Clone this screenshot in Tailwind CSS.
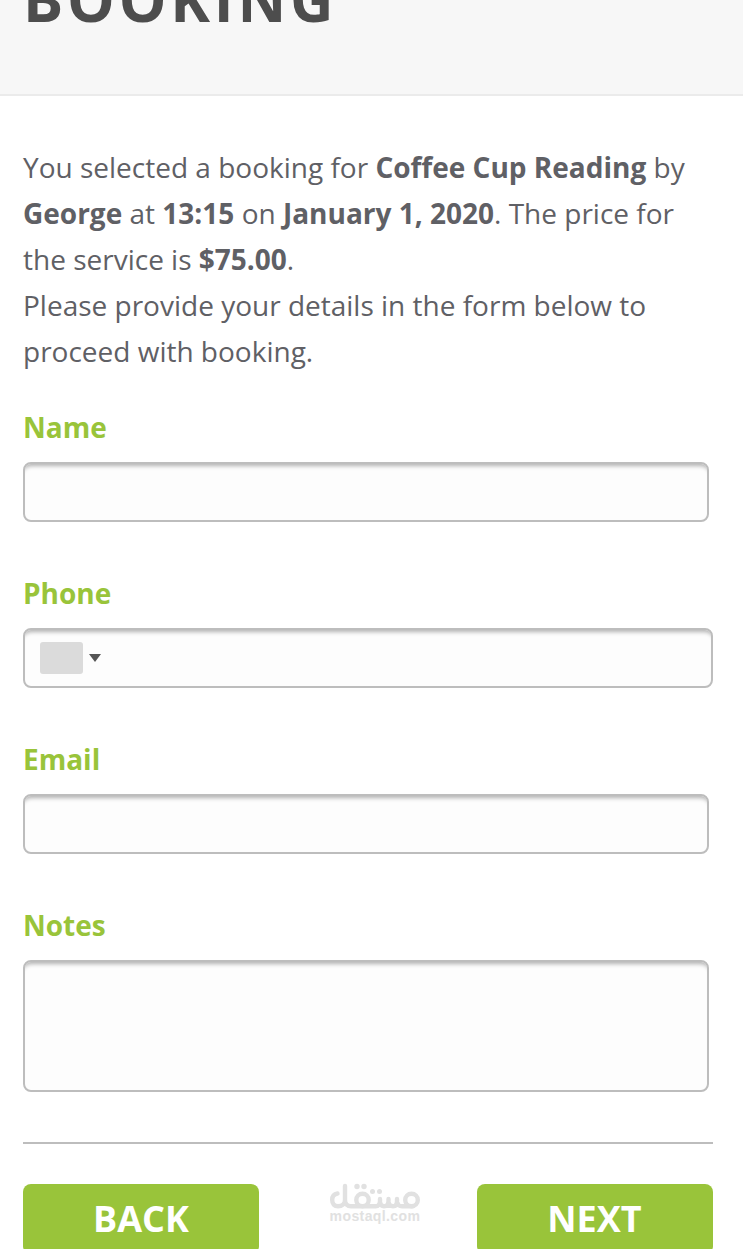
<!DOCTYPE html>
<html lang="en">
<head>
  <meta charset="UTF-8" />
  <meta name="viewport" content="width=device-width, initial-scale=1.0" />
  <title>Booking</title>
  <script src="https://cdn.jsdelivr.net/npm/@tailwindcss/browser@4"></script>
</head>
<body class="bg-white h-[1249px] overflow-hidden font-['Open_Sans',sans-serif] text-[28px] text-[#5f6065]">

  <!-- Page title -->
  <header class="w-[743px] h-24 bg-[#f7f7f7] border-b-2 border-[#ebebeb] pl-[23px] flex items-end overflow-hidden">
    <h1 class="mb-[63px] text-[60px] leading-[64px] font-bold tracking-[3.8px] text-[#4d4d4d]">BOOKING</h1>
  </header>

  <main class="pl-[23px] w-[713px] pt-12">
    <p class="leading-[46px] whitespace-nowrap">
      You selected a booking for <b>Coffee Cup Reading</b> by<br>
      <b>George</b> at <b>13:15</b> on <b>January 1, 2020</b>. The price for<br>
      the service is <b>$75.00</b>.<br>
      Please provide your details in the form below to<br>
      proceed with booking.
    </p>

    <!-- Details form -->
    <form class="pt-[30px]">
      <div class="h-[166px]">
        <label for="name" class="block h-[58px] leading-[46px] font-bold text-[#99c43a]">Name</label>
        <input id="name" type="text" class="block w-[686px] h-[60px] px-3 border-2 border-[#bdbdbd] rounded-lg bg-[#fdfdfd] shadow-[inset_0_6px_4px_-4px_rgba(0,0,0,0.3)]" />
      </div>

      <div class="h-[166px]">
        <label for="phone" class="block h-[58px] leading-[46px] font-bold text-[#99c43a]">Phone</label>
        <div class="flex items-center gap-[6px] w-[690px] h-[60px] pl-[15px] border-2 border-[#bdbdbd] rounded-lg bg-[#fdfdfd] shadow-[inset_0_6px_4px_-4px_rgba(0,0,0,0.3)]">
          <span class="w-[43px] h-8 rounded-[3px] bg-[#dbdbdb]"></span>
          <svg class="w-3 h-2" viewBox="0 0 12 8"><path d="M0 0h12L6 8z" fill="#555" /></svg>
          <input id="phone" type="tel" class="flex-1 h-full bg-transparent" />
        </div>
      </div>

      <div class="h-[166px]">
        <label for="email" class="block h-[58px] leading-[46px] font-bold text-[#99c43a]">Email</label>
        <input id="email" type="email" class="block w-[686px] h-[60px] px-3 border-2 border-[#bdbdbd] rounded-lg bg-[#fdfdfd] shadow-[inset_0_6px_4px_-4px_rgba(0,0,0,0.3)]" />
      </div>

      <div>
        <label for="notes" class="block h-[58px] leading-[46px] font-bold text-[#99c43a]">Notes</label>
        <textarea id="notes" class="block w-[686px] h-[132px] px-3 border-2 border-[#bdbdbd] rounded-lg resize-none bg-[#fdfdfd] shadow-[inset_0_6px_4px_-4px_rgba(0,0,0,0.3)]"></textarea>
      </div>

      <!-- Navigation -->
      <div class="mt-[50px] border-t-2 border-[#bdbdbd] pt-10 flex items-start">
        <button type="button" class="w-[236px] h-[70px] rounded-lg bg-[#99c43a] text-white text-[36px] leading-[70px] font-bold">BACK</button>
        <div class="w-[92px] ml-[70px] mr-14 -mt-px flex flex-col items-center text-[#e1e1e1]">
          <svg class="w-[92px] h-[26px]" viewBox="0 0 92 26" fill="none" stroke="currentColor" stroke-width="4.4" stroke-linecap="round" stroke-linejoin="round">
            <path d="M8.500 10.500C5 11 3.200 13.500 3.200 17C3.200 21 5.500 23.300 9 23.300C13 23.300 16 21 16 17V3V17C16 21 18.500 23.300 22 23.300H46.500C49.500 23.300 51 21 51 18V16M51 19C51.500 22.500 53 23.300 55 23.300C58 23.300 59.500 21.500 59.500 18V16M59.500 19C60 22.500 62 23.300 64 23.300C67 23.300 68 21.500 68 18V16M68 19C69 22.500 71 23.300 73 23.300H84" />
            <circle cx="33.500" cy="17" r="6.200" />
            <circle cx="82.500" cy="17" r="6.300" />
            <g fill="currentColor" stroke="none">
              <circle cx="28" cy="3.500" r="2.700" />
              <circle cx="35" cy="3.500" r="2.700" />
              <circle cx="43.500" cy="8.500" r="2.500" />
              <circle cx="50.500" cy="8.500" r="2.500" />
            </g>
          </svg>
          <span class="font-['Liberation_Sans',sans-serif] text-[14px] leading-[14px] font-bold tracking-[0.4px]">mostaql.com</span>
        </div>
        <button type="button" class="w-[236px] h-[70px] pr-[1px] rounded-lg bg-[#99c43a] text-white text-[36px] leading-[70px] font-bold">NEXT</button>
      </div>
    </form>
  </main>

</body>
</html>
